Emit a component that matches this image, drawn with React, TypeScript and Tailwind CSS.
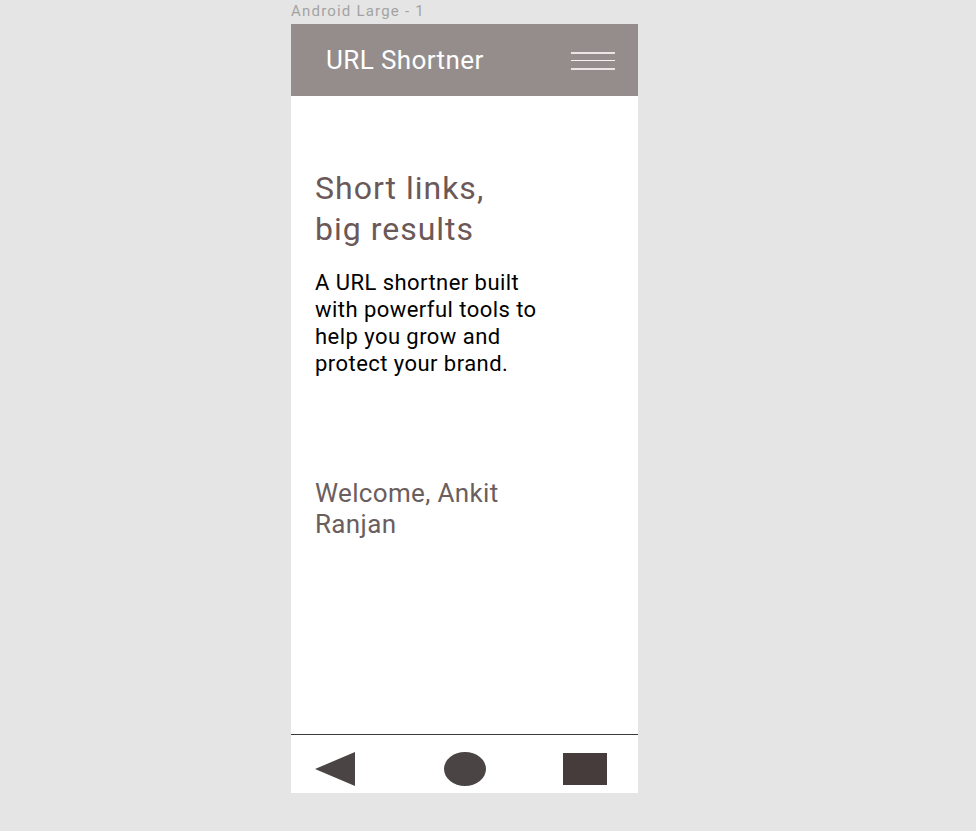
export default function App() {
  return (
    <div className="min-h-screen w-full bg-[#e5e5e5] font-['Roboto',sans-serif]">
      <div className="ml-[291px] w-[347px]">
        <div className="h-[24px] pt-[2px] text-[15px] leading-[18px] tracking-[1.2px] text-[#a3a3a3]">Android Large - 1</div>
        <div className="flex h-[769px] flex-col bg-white">
          <header className="flex h-[72px] shrink-0 items-center justify-between bg-[#948d8c] pl-[35px] pr-[23px]">
            <h1 className="text-[26px] leading-none tracking-[0.4px] text-white">URL Shortner</h1>
            <div className="flex w-[44px] flex-col gap-[6px] pt-[1px]">
              <span className="h-[2px] bg-[#e9e6e5]" />
              <span className="h-[1px] bg-[#f4f2f2]" />
              <span className="mt-[1px] h-[2px] bg-[#e9e6e5]" />
            </div>
          </header>
          <main className="flex-1 pl-[24px] pt-[72px]">
            <h2 className="w-[240px] text-[32px] leading-[41px] tracking-[1px] text-[#6b5858]">
              Short links,
              <br />
              big results
            </h2>
            <p className="mt-[19px] w-[232px] text-[22px] leading-[27px] tracking-[0.45px] text-black">
              A URL shortner built with powerful tools to help you grow and protect your brand.
            </p>
            <p className="mt-[101px] w-[240px] text-[26px] leading-[31px] tracking-[0.35px] text-[#6b5e5e]">
              Welcome, Ankit Ranjan
            </p>
          </main>
          <nav className="flex h-[59px] shrink-0 items-center justify-between border-t border-[#3d3838] pl-[24px] pr-[31px] pt-[10px]">
            <svg width="40" height="34" viewBox="0 0 40 34">
              <polygon points="0,17 40,0 40,34" fill="#4b4444" />
            </svg>
            <span className="ml-[12px] h-[34px] w-[42px] rounded-[50%] bg-[#4a4444]" />
            <span className="h-[32px] w-[44px] bg-[#463c3c]" />
          </nav>
        </div>
      </div>
    </div>
  );
}
